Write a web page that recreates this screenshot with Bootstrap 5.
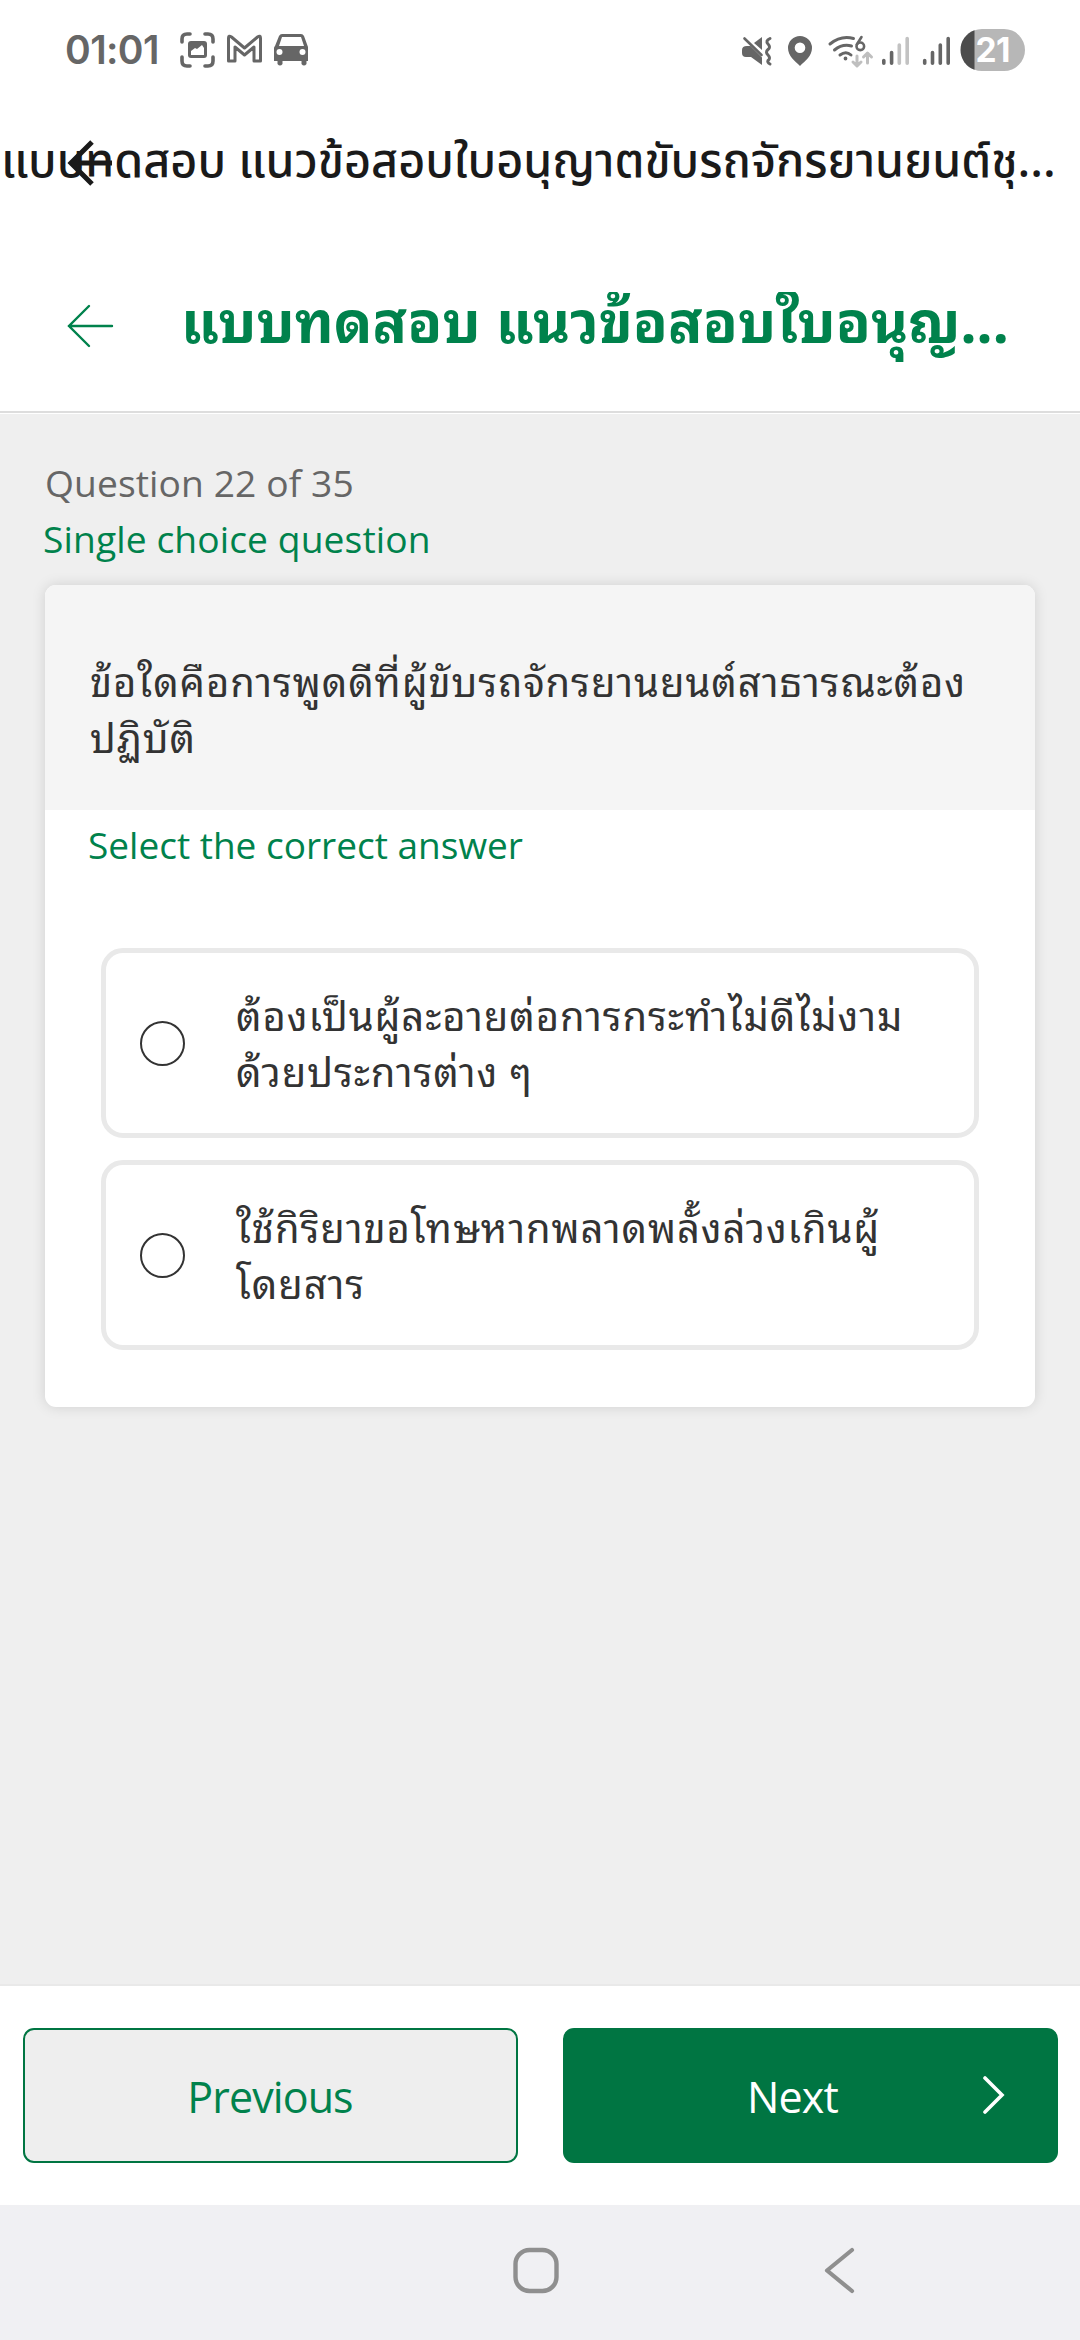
<!DOCTYPE html>
<html lang="th">
<head>
<meta charset="utf-8">
<meta name="viewport" content="width=device-width, initial-scale=1">
<title>แบบทดสอบ</title>
<link href="https://cdn.jsdelivr.net/npm/bootstrap@5.3.0/dist/css/bootstrap.min.css" rel="stylesheet">
<style>
  :root { --brand: #00824c; --brand-fill: #007542; --ink: #333; --status: #666; }
  body { font-family: "Open Sans", "Loma", sans-serif; color: var(--ink); background: #fff; width: 1080px; height: 2340px; overflow: hidden; }
  .screen { height: 2340px; }
  svg { display: block; flex: none; }
  .status-bar { height: 100px; padding: 0 55px 0 65px; color: var(--status); }
  .clock { font: 600 39px/100px "Inter", sans-serif; width: 114px; letter-spacing: -.6px; }
  .app-title { height: 126px; }
  .app-title-text { font: 500 46.700px/126px "Noto Sans Thai", "Loma", sans-serif; color: #1a1a1a; padding-left: 1px; white-space: nowrap; }
  .app-back { left: 66px; top: 39px; }
  .page-head { height: 187px; border-bottom: 2px solid #ddd; padding: 14px 66px 0 66px; }
  .page-title { font: 700 57px/80px "Noto Sans Thai Looped", "Loma", sans-serif; color: var(--brand); margin: -15px 0 0 66px; white-space: nowrap; letter-spacing: .1px; clip-path: inset(14px 0 -20px 0); }
  .quiz-body { background: #efefef; border-top: 1px solid #fff; border-bottom: 2px solid #e9e9e9; padding: 41px 45px 0; }
  .info-line { font-size: 37.200px; line-height: 56px; letter-spacing: .1px; white-space: nowrap; }
  .muted-ink { color: #666; }
  .brand-ink { color: var(--brand); }
  .kind-line { margin-left: -2px; }
  .quiz-card { margin-top: 18px; border-radius: 11px; background: #fff; box-shadow: 0 0 14px rgba(0,0,0,.13); height: 822px; }
  .question-box { height: 225px; background: #f5f5f5; border-radius: 11px 11px 0 0; padding: 66px 45px 0; }
  .thai-line { font-family: "Noto Sans Thai Looped", "Loma", sans-serif; font-weight: 400; font-size: 40px; line-height: 56px; letter-spacing: .9px; white-space: nowrap; }
  .hint-line { padding: 7px 43px 0; height: 138px; font-size: 37px; letter-spacing: 0; }
  .option-list { padding: 0 56px; gap: 22px; }
  .option-item { height: 190px; border: 5px solid #e9e9e9; border-radius: 22px; padding: 0 34px; }
  .option-text { padding-bottom: 4px; }
  .option-dot { width: 45px; height: 45px; border: 2px solid #333; border-radius: 50%; flex: none; margin-right: 51px; }
  .foot-bar { height: 219px; padding: 42px 22.5px; gap: 45px; }
  .foot-btn { height: 135px; border-radius: 11px; font-size: 43px; line-height: 1; border: 2px solid var(--brand-fill); letter-spacing: -.900px; padding-top: 8px; }
  .foot-prev, .foot-prev:hover { background: #eee; color: var(--brand); }
  .foot-next, .foot-next:hover { background: var(--brand-fill); color: #fff; }
  .next-label { padding-left: 26px; }
  .next-chevron { margin-right: 39px; margin-top: -3px; }
  .nav-sys { height: 135px; background: #f0f0f3; padding: 0 0 3px 511px; }
  .nav-back { margin-left: 260px; }
</style>
</head>
<body>
<div class="screen d-flex flex-column">
  <header class="status-bar d-flex align-items-center">
    <div class="clock">01:01</div>
    <svg width="131" height="40" viewBox="178 32 131 40" fill="none" stroke="#666">
      <path d="M181 44v-3q0-5 5-5h3M204 36h3q5 0 5 5v3M212 59v4q0 5-5 5h-3M189 68h-3q-5 0-5-5v-4" stroke-width="3.6" stroke-linecap="round"/>
      <rect x="187" y="43" width="19" height="17" rx="3" fill="#666" stroke="none"/>
      <path d="M190 57v-4l4-3 2 1 5-4 2 3v7z" fill="#fff" stroke="none"/>
      <path d="M227.500 63V40q0-3 3-1l13 11 13-11q3-2 3 1v23h-6.500V49L243.500 57 234 49v14z" stroke-width="3" stroke-linejoin="round"/>
      <path d="M282 36h18q2 0 3 2l4 11v14h-1.500v3q-2.500 3-5 0v-3h-19v3q-2.500 3-5 0v-3H273V50q0-1 1-2l4-10q1-2 3-2z" fill="#666" stroke="none"/>
      <path d="M281 39h19l3 9h-25z" fill="#fff" stroke="none"/>
      <circle cx="278.500" cy="54" r="3" fill="#fff" stroke="none"/><circle cx="301.500" cy="54" r="3" fill="#fff" stroke="none"/>
    </svg>
    <svg class="ms-auto" width="286" height="46" viewBox="739 27 286 46" fill="none">
      <g fill="#666">
        <path d="M754 43l8-6v13z"/>
        <path d="M744 38.500l20 19" stroke="#fff" stroke-width="6"/>
        <path d="M744.500 38.500l17 16.500" stroke="#666" stroke-width="2.600" stroke-linecap="round"/>
        <path d="M747 46h3.500L762 57.500V65l-11-8h-5q-4 0-4-4v-3q0-4 5-4z"/>
        <path d="M770 38.500q-5 2.500-2 5.500t0 5.500 0 5.500 0 5.500q-1 2 2 3.500" fill="none" stroke="#666" stroke-width="3" stroke-linecap="round"/>
        <path fill-rule="evenodd" d="M800 36a12 12 0 0 1 12 12c0 8-7 13-12 18-5-5-12-10-12-18a12 12 0 0 1 12-12zm0 6.500a5.300 5.300 0 1 0 0 10.600 5.300 5.300 0 0 0 0-10.600z"/>
      </g>
      <g stroke="#666" stroke-width="3" stroke-linecap="round">
        <path d="M830 44q11-9 23.500-5.500M834.500 50q8-6.500 17-4M840 55q6-4.500 11 0"/>
        <circle cx="845.500" cy="58.500" r="1" stroke-width="1.800"/>
        <path d="M861.500 37l-4.700 7.500" stroke-width="2.600"/><circle cx="860.300" cy="46.300" r="3.800" stroke-width="2.600"/>
      </g>
      <g stroke="#bfbfbf" stroke-width="3" stroke-linecap="round" stroke-linejoin="round"><path d="M857 56v9M853 62l4 4 4-4M867.500 63v-9M863.500 57l4-4 4 4"/></g>
      <g stroke="#666" stroke-width="3.600" stroke-linecap="round">
        <path d="M883.800 60.500v2.700M891.600 52.500v10.700M924.700 60.500v2.700M932.500 52.500v10.700M940.300 45v18.200M948.200 38.500v24.700"/>
        <path stroke="#c2c2c2" d="M899.300 45v18.200M907.200 38.500v24.700"/>
      </g>
      <rect x="961" y="29" width="64" height="42" rx="21" fill="#b7b7b7"/>
      <path d="M974.500 30.200A21 21 0 0 0 974.500 69.800z" fill="#4c4c4c"/>
      <text x="975.500" y="62" font-family="Inter, sans-serif" font-weight="700" font-size="33.500" fill="#fff" textLength="35">21</text>
    </svg>
  </header>

  <div class="app-title position-relative">
    <div class="app-title-text">แบบทดสอบ แนวข้อสอบใบอนุญาตขับรถจักรยานยนต์ชุ...</div>
    <svg class="app-back position-absolute" width="48" height="48" viewBox="0 0 48 48" fill="none" stroke="#1a1a1a" stroke-width="5"><path d="M26 3L5 24l21 21M5 24h41"/></svg>
  </div>

  <div class="page-head d-flex align-items-center">
    <svg width="49" height="44" viewBox="0 0 49 44" fill="none" stroke="#00824c" stroke-width="2.400" stroke-linecap="round"><path d="M23 2L3 22l20 20M3 22h43"/></svg>
    <div class="page-title">แบบทดสอบ แนวข้อสอบใบอนุญ...</div>
  </div>

  <main class="quiz-body flex-grow-1">
    <div class="info-line muted-ink">Question 22 of 35</div>
    <div class="info-line brand-ink kind-line">Single choice question</div>
    <section class="quiz-card">
      <div class="question-box">
        <div class="thai-line">ข้อใดคือการพูดดีที่ผู้ขับรถจักรยานยนต์สาธารณะต้อง<br>ปฏิบัติ</div>
      </div>
      <div class="info-line hint-line brand-ink">Select the correct answer</div>
      <div class="option-list d-flex flex-column">
        <label class="option-item d-flex align-items-center">
          <span class="option-dot"></span>
          <span class="option-text thai-line">ต้องเป็นผู้ละอายต่อการกระทำไม่ดีไม่งาม<br>ด้วยประการต่าง ๆ</span>
        </label>
        <label class="option-item d-flex align-items-center">
          <span class="option-dot"></span>
          <span class="option-text thai-line">ใช้กิริยาขอโทษหากพลาดพลั้งล่วงเกินผู้<br>โดยสาร</span>
        </label>
      </div>
    </section>
  </main>

  <footer class="foot-bar d-flex">
    <button class="btn foot-btn foot-prev flex-fill w-50">Previous</button>
    <button class="btn foot-btn foot-next flex-fill w-50 d-flex align-items-center"><span class="flex-grow-1 next-label">Next</span>
      <svg class="next-chevron" width="22" height="38" viewBox="0 0 22 38" fill="none" stroke="#fff" stroke-width="3.600" stroke-linecap="round"><path d="M2 2l17 17L2 36"/></svg></button>
  </footer>

  <nav class="nav-sys d-flex align-items-center">
    <svg width="50" height="50" viewBox="0 0 50 50" fill="none" stroke="#8f8f8f" stroke-width="4.400"><rect x="4.500" y="4" width="41" height="41" rx="14"/></svg>
    <svg class="nav-back" width="36" height="50" viewBox="0 0 36 50" fill="none" stroke="#8f8f8f" stroke-width="4.200" stroke-linecap="round" stroke-linejoin="round"><path d="M31 4L6 24.500 31 45"/></svg>
  </nav>
</div>
<script src="https://cdn.jsdelivr.net/npm/bootstrap@5.3.0/dist/js/bootstrap.bundle.min.js"></script>
</body>
</html>
